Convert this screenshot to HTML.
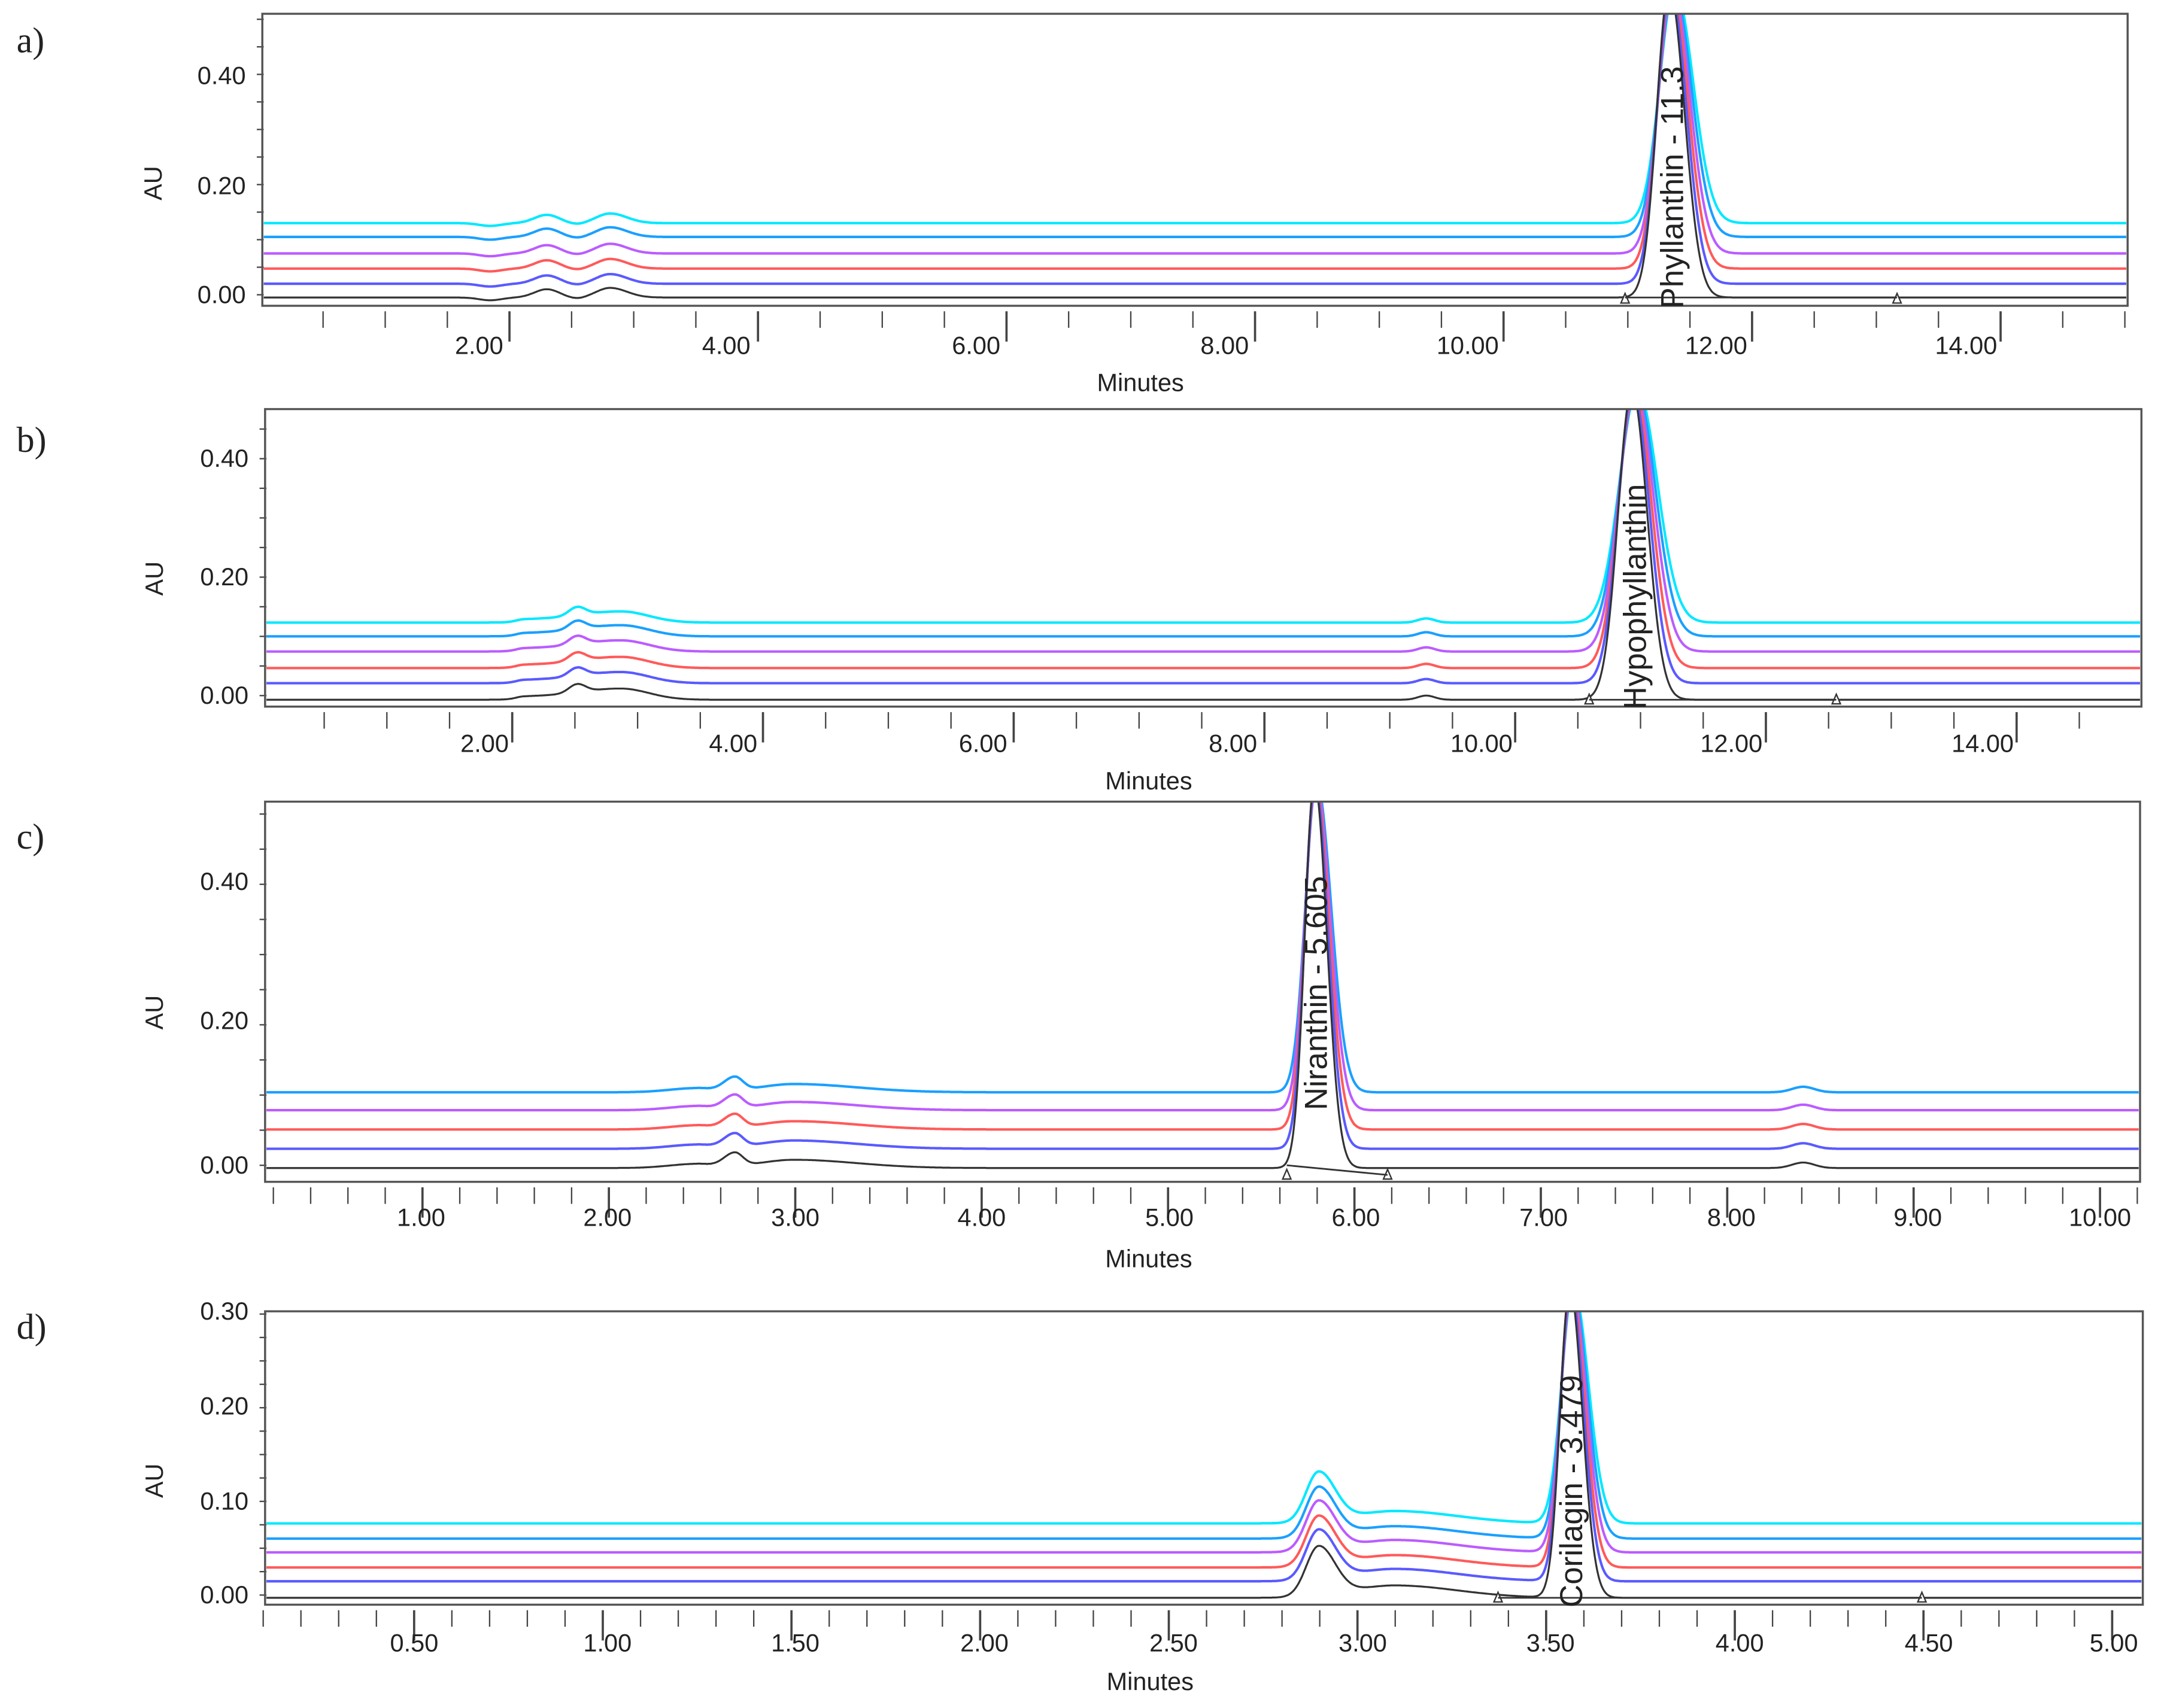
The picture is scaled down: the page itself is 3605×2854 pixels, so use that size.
<!DOCTYPE html>
<html><head><meta charset="utf-8">
<style>
html,body{margin:0;padding:0;background:#fff;}
svg{display:block;}
text{font-family:"Liberation Sans",sans-serif;fill:#222;}
.t{font-size:18px;text-anchor:middle;}
.y{font-size:18px;text-anchor:end;}
.p{font-family:"Liberation Serif",serif;font-size:26px;}
.pk{font-size:23px;}
</style></head><body>
<svg id="s" width="3605" height="2854" viewBox="0 0 1563 1240" preserveAspectRatio="none" xmlns="http://www.w3.org/2000/svg">
<defs>
<clipPath id="ca"><rect x="190" y="10" width="1351" height="212"/></clipPath>
<clipPath id="cb"><rect x="192" y="297" width="1359" height="216"/></clipPath>
<clipPath id="cc"><rect x="192" y="582" width="1358" height="276"/></clipPath>
<clipPath id="cd"><rect x="192" y="952" width="1360" height="213"/></clipPath>
</defs>
<g id="g"></g>
<rect x="190" y="10" width="1351" height="212" fill="none" stroke="#555" stroke-width="1.5"/>
<rect x="192" y="297" width="1359" height="216" fill="none" stroke="#555" stroke-width="1.5"/>
<rect x="192" y="582" width="1358" height="276" fill="none" stroke="#555" stroke-width="1.5"/>
<rect x="192" y="952" width="1360" height="213" fill="none" stroke="#555" stroke-width="1.5"/>

<text class="p" x="12" y="38">a)</text>
<text class="p" x="12" y="328">b)</text>
<text class="p" x="12" y="616">c)</text>
<text class="p" x="12" y="972">d)</text>

<!-- a -->
<text class="y" x="178" y="61">0.40</text><text class="y" x="178" y="141">0.20</text><text class="y" x="178" y="220">0.00</text>
<text class="t" transform="translate(117,133) rotate(-90)">AU</text>
<text class="t" x="347" y="257">2.00</text><text class="t" x="526" y="257">4.00</text><text class="t" x="707" y="257">6.00</text><text class="t" x="887" y="257">8.00</text><text class="t" x="1063" y="257">10.00</text><text class="t" x="1243" y="257">12.00</text><text class="t" x="1424" y="257">14.00</text>
<text class="t" x="826" y="284">Minutes</text>
<text class="pk" transform="translate(1219,224) rotate(-90)">Phyllanthin - 11.3</text>

<!-- b -->
<text class="y" x="180" y="339">0.40</text><text class="y" x="180" y="425">0.20</text><text class="y" x="180" y="511">0.00</text>
<text class="t" transform="translate(118,420) rotate(-90)">AU</text>
<text class="t" x="351" y="546">2.00</text><text class="t" x="531" y="546">4.00</text><text class="t" x="712" y="546">6.00</text><text class="t" x="893" y="546">8.00</text><text class="t" x="1073" y="546">10.00</text><text class="t" x="1254" y="546">12.00</text><text class="t" x="1436" y="546">14.00</text>
<text class="t" x="832" y="573">Minutes</text>
<text class="pk" transform="translate(1192,515) rotate(-90)">Hypophyllanthin</text>

<!-- c -->
<text class="y" x="180" y="646">0.40</text><text class="y" x="180" y="747">0.20</text><text class="y" x="180" y="852">0.00</text>
<text class="t" transform="translate(118,735) rotate(-90)">AU</text>
<text class="t" x="305" y="890">1.00</text><text class="t" x="440" y="890">2.00</text><text class="t" x="576" y="890">3.00</text><text class="t" x="711" y="890">4.00</text><text class="t" x="847" y="890">5.00</text><text class="t" x="982" y="890">6.00</text><text class="t" x="1118" y="890">7.00</text><text class="t" x="1254" y="890">8.00</text><text class="t" x="1389" y="890">9.00</text><text class="t" x="1521" y="890">10.00</text>
<text class="t" x="832" y="920">Minutes</text>
<text class="pk" transform="translate(961,806) rotate(-90)">Niranthin - 5.605</text>

<!-- d -->
<text class="y" x="180" y="958">0.30</text><text class="y" x="180" y="1027">0.20</text><text class="y" x="180" y="1096">0.10</text><text class="y" x="180" y="1164">0.00</text>
<text class="t" transform="translate(118,1075) rotate(-90)">AU</text>
<text class="t" x="300" y="1199">0.50</text><text class="t" x="440" y="1199">1.00</text><text class="t" x="576" y="1199">1.50</text><text class="t" x="713" y="1199">2.00</text><text class="t" x="850" y="1199">2.50</text><text class="t" x="987" y="1199">3.00</text><text class="t" x="1123" y="1199">3.50</text><text class="t" x="1260" y="1199">4.00</text><text class="t" x="1397" y="1199">4.50</text><text class="t" x="1531" y="1199">5.00</text>
<text class="t" x="833" y="1227">Minutes</text>
<text class="pk" transform="translate(1146,1167) rotate(-90)">Corilagin - 3.479</text>
</svg>
<script>
var g=document.getElementById('g'),NS='http://www.w3.org/2000/svg';
function el(n,a){var e=document.createElementNS(NS,n);for(var k in a)e.setAttribute(k,a[k]);g.appendChild(e);return e;}
var cols=['#333','#5a5aff','#ff5a5a','#bb5cff','#1aa0ff','#00e8ff'];
function gs(x,c,h,sl,sr){var s=x<c?sl:sr;return h*Math.exp(-(x-c)*(x-c)/(2*s*s));}
function panel(o){
  for(var x=o.x0+o.mi,k=1;x<=o.x2+1;x+=o.mi,k++){var maj=(k%o.mj==0);
    el('line',{x1:x,x2:x,y1:o.bot+4,y2:o.bot+(maj?26:16),stroke:'#444','stroke-width':maj?1.6:1});}
  for(var y=o.y0;y>=o.top;y-=o.ym){el('line',{x1:o.x1-5,x2:o.x1,y1:y,y2:y,stroke:'#444','stroke-width':1});}
  for(var i=o.bl.length-1;i>=0;i--){
    var d='';for(var x=o.x1;x<=o.x2;x+=0.5){var v=0;
      for(var j=0;j<o.f.length;j++){var f=o.f[j];var sh=f[4]?f[4]*i:0;var sc=f[5]?1+f[5]*i:1;var hh=f[6]?f[1]-(o.bl[0]-o.bl[i]):f[1];v+=gs(x,f[0]+sh,hh,f[2]*sc,f[3]*sc);}
      var yy=o.bl[i]-v;
      d+=(x==o.x1?'M':'L')+x+' '+yy.toFixed(1);}
    el('path',{d:d,fill:'none',stroke:cols[i],'stroke-width':i==0?1.4:1.8,'clip-path':'url(#'+o.id+')'});}
  o.tri.forEach(function(t){el('path',{d:'M'+(t-3)+' '+(o.bot-2)+'L'+t+' '+(o.bot-9)+'L'+(t+3)+' '+(o.bot-2)+'Z',fill:'#fff',stroke:'#333','stroke-width':1});});
  if(o.base)el('line',{x1:o.base[0],x2:o.base[1],y1:o.base[2],y2:o.base[3],stroke:'#333','stroke-width':1.2});
}
panel({id:'ca',x1:191,x2:1540,top:12,bot:222,x0:189,mi:45,mj:4,y0:214,ym:20,bl:[216,206,195,184,172,162],
 f:[[1209,225,9,11,0.8,0.04,1],[396,6,9,9],[442,7,10,12],[355,-2,8,8],[418,-1,6,6]],tri:[1177,1374],base:[1177,1374,216,216]});
panel({id:'cb',x1:193,x2:1550,top:299,bot:513,x0:189.4,mi:45.4,mj:4,y0:505,ym:21.5,bl:[508,496,485,473,462,452],
 f:[[1182,225,10,11,0.8,0.06,1],[418,6,6,6],[450,8,30,20],[380,2,6,30],[1033,3,6,6]],tri:[1151,1330],base:[1151,1330,508,508]});
panel({id:'cc',x1:193,x2:1549,top:584,bot:858,x0:171,mi:27,mj:5,y0:846,ym:25.5,bl:[848,834,820,806,793],
 f:[[952,280,7,9,0.4,0.04,1],[532,10,8,6],[575,6,25,45],[505,3,20,10],[1306,4,8,8]],tri:[932,1005],base:[932,1005,846,853]});
panel({id:'cd',x1:193,x2:1551,top:954,bot:1165,x0:163.3,mi:27.33,mj:5,y0:1158,ym:17,bl:[1160,1148,1138,1127,1117,1106],
 f:[[955,36,9,12],[1010,9,30,45],[1137,225,7,9,0.5,0.04,1]],tri:[1085,1392],base:[1085,1392,1160,1160]});
</script>
</body></html>
